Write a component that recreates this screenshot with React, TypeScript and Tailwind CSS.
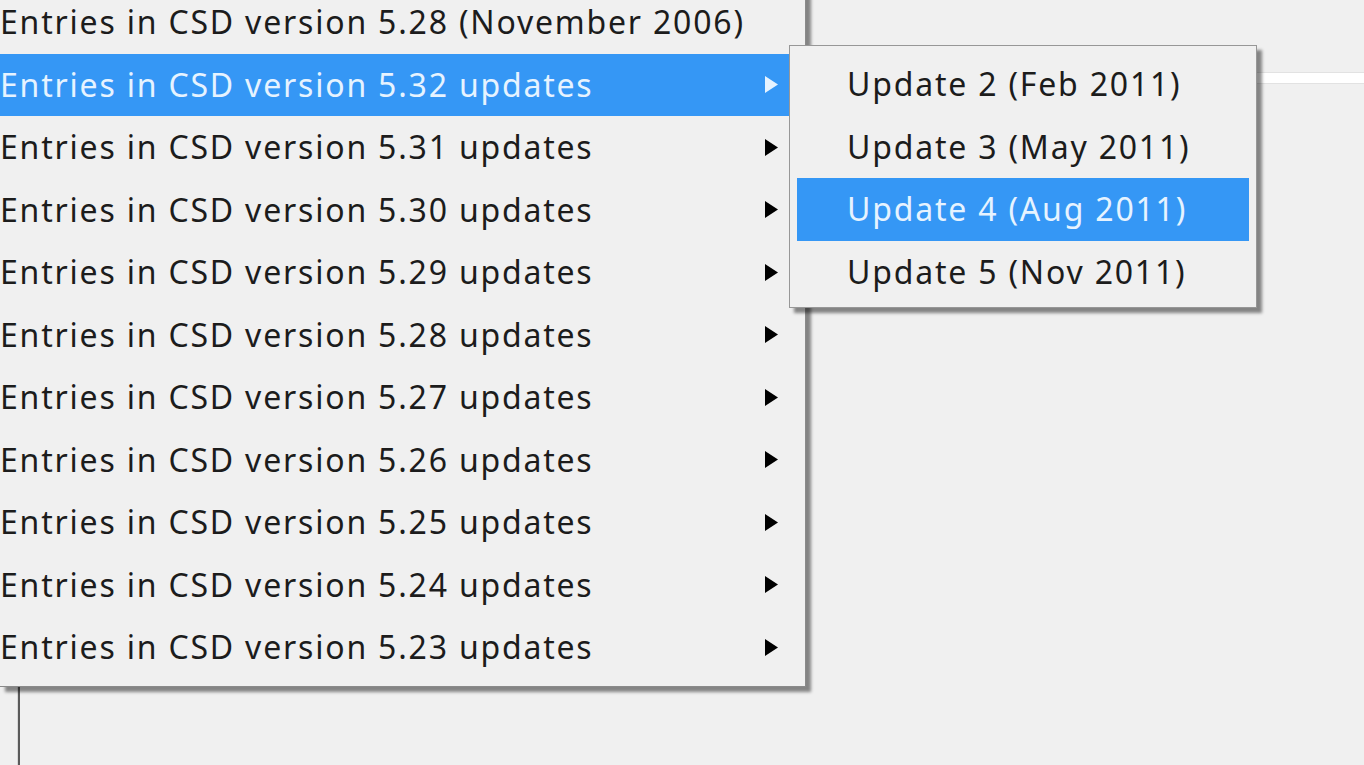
import React from "react";

const Arrow = ({ light }: { light?: boolean }) => (
  <svg width="13" height="17" viewBox="0 0 13 17" className="shrink-0">
    <polygon points="0,0 13,8.5 0,17" fill={light ? "#e6f3ff" : "#000000"} />
  </svg>
);

const mainItems = [
  { label: "Entries in CSD version 5.28 (November 2006)", sub: false },
  { label: "Entries in CSD version 5.32 updates", sub: true, active: true },
  { label: "Entries in CSD version 5.31 updates", sub: true },
  { label: "Entries in CSD version 5.30 updates", sub: true },
  { label: "Entries in CSD version 5.29 updates", sub: true },
  { label: "Entries in CSD version 5.28 updates", sub: true },
  { label: "Entries in CSD version 5.27 updates", sub: true },
  { label: "Entries in CSD version 5.26 updates", sub: true },
  { label: "Entries in CSD version 5.25 updates", sub: true },
  { label: "Entries in CSD version 5.24 updates", sub: true },
  { label: "Entries in CSD version 5.23 updates", sub: true },
];

const subItems = [
  { label: "Update 2 (Feb 2011)" },
  { label: "Update 3 (May 2011)" },
  { label: "Update 4 (Aug 2011)", active: true },
  { label: "Update 5 (Nov 2011)" },
];

export default function App() {
  return (
    <div className="relative w-[1364px] h-[765px] overflow-hidden bg-[#f0f0f0] font-['Noto_Sans','Open_Sans',sans-serif] text-[32px] tracking-[1.8px]">
      {/* window behind the menus */}
      <div className="flex flex-col h-full">
        <div className="h-[72px]" />
        <div className="h-[12px] border-y border-[#e2e2e2] bg-white" />
        <div className="flex-1 flex">
          <div className="w-[17px]" />
          <div className="w-[3px] bg-[#5a5a5a] border-l border-[#d8d8d8]" />
        </div>
      </div>

      {/* main menu */}
      <div className="absolute left-0 top-[-9px] w-[806px] bg-[#f0f0f0] border-r border-b border-[#8a8a8a] shadow-[5px_5px_3px_rgba(0,0,0,0.45)] pb-[7px]">
        {mainItems.map((it, i) => (
          <div
            key={i}
            className={`h-[62.5px] flex items-center justify-between pr-[27px] ${
              it.active ? "bg-[#3597f5] text-[#e6f3ff]" : "text-[#1c1c1c]"
            }`}
          >
            <span className="whitespace-nowrap leading-none">{it.label}</span>
            {it.sub && <Arrow light={it.active} />}
          </div>
        ))}
      </div>

      {/* submenu */}
      <div className="absolute left-[789px] top-[45px] w-[468px] bg-[#f0f0f0] border border-[#979797] shadow-[5px_5px_3px_rgba(0,0,0,0.45)] px-[7px] pt-[7px] pb-[4px]">
        {subItems.map((it, i) => (
          <div
            key={i}
            className={`h-[62.5px] flex items-center pl-[50px] ${
              it.active ? "bg-[#3597f5] text-[#e6f3ff]" : "text-[#1c1c1c]"
            }`}
          >
            <span className="whitespace-nowrap leading-none">{it.label}</span>
          </div>
        ))}
      </div>
    </div>
  );
}
